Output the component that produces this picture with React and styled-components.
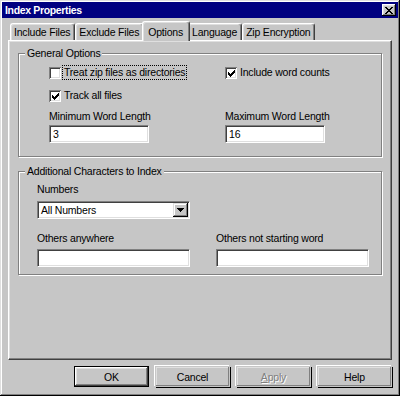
import React from 'react';
import styled, { createGlobalStyle } from 'styled-components';

const FACE = '#c6c6c6';

const GlobalStyle = createGlobalStyle`
  html, body { margin: 0; padding: 0; background: ${FACE}; }
  body { font-family: "Liberation Sans", Arial, sans-serif; }
  *, *::before, *::after { box-sizing: border-box; }
`;

const Window = styled.div`
  width: 400px;
  height: 396px;
  padding: 2px;
  display: flex;
  flex-direction: column;
  background: ${FACE};
  color: #000;
  font-size: 10.5px;
  letter-spacing: -0.2px;
  box-shadow: inset -1px -1px #000, inset 1px 1px #dfdfdf,
    inset -2px -2px #808080, inset 2px 2px #fff;
`;

const TitleBar = styled.div`
  height: 16px;
  flex: none;
  display: flex;
  align-items: center;
  justify-content: space-between;
  padding: 0 2px 0 3px;
  background: #000080;
`;

const Title = styled.div`
  color: #fff;
  font-weight: bold;
  font-size: 10.5px;
  letter-spacing: -0.35px;
  line-height: 16px;
`;

const CloseButton = styled.div`
  width: 14px;
  height: 12px;
  display: flex;
  align-items: center;
  justify-content: center;
  background: ${FACE};
  box-shadow: inset -1px -1px #000, inset 1px 1px #fff,
    inset -2px -2px #808080, inset 2px 2px #dfdfdf;
`;

const Body = styled.div`
  flex: 1;
  display: flex;
  flex-direction: column;
  padding: 3px 6px 7px 6px;
`;

const TabRow = styled.div`
  height: 19px;
  flex: none;
  display: flex;
  align-items: flex-end;
  padding-left: 2px;
`;

const Tab = styled.div`
  height: ${(p) => (p.$active ? 20 : 17)}px;
  margin: ${(p) => (p.$active ? '0 -2px -1px' : '0')};
  padding: ${(p) => (p.$active ? '0 6px 0 5px' : '0 4px 0 3px')};
  display: flex;
  align-items: center;
  white-space: nowrap;
  background: ${FACE};
  border-top: 1px solid #fff;
  border-left: 1px solid #fff;
  border-right: 1px solid #404040;
  border-radius: 3px 3px 0 0;
  box-shadow: inset -1px 0 #808080, inset 1px 1px #dfdfdf;
  position: ${(p) => (p.$active ? 'relative' : 'static')};
  z-index: ${(p) => (p.$active ? 2 : 'auto')};
`;

const Panel = styled.div`
  height: 320px;
  flex: none;
  display: flex;
  flex-direction: column;
  gap: 8px;
  padding: 6px 9px;
  border: 1px solid;
  border-color: #fff #404040 #404040 #fff;
  box-shadow: inset -1px -1px #808080, inset 1px 1px #dfdfdf;
`;

const Group = styled.fieldset`
  margin: 0;
  padding: 0;
  min-width: 0;
  border: 1px solid #808080;
  box-shadow: inset 1px 1px #fff, 1px 1px #fff;
`;

const Legend = styled.legend`
  margin-left: 6px;
  padding: 0 2px;
  line-height: 13px;
  background: ${FACE};
`;

const GroupBody = styled.div`
  display: flex;
  flex-direction: column;
  padding: ${(p) => p.$pad};
`;

const Columns = styled.div`
  display: grid;
  grid-template-columns: ${(p) => p.$cols};
  column-gap: ${(p) => p.$gap || 0}px;
  margin-top: ${(p) => p.$mt || 0}px;
`;

const Field = styled.div`
  display: flex;
  flex-direction: column;
  gap: ${(p) => p.$gap}px;
`;

const Label = styled.div`
  line-height: 13px;
  white-space: nowrap;
`;

const TextBox = styled.div`
  width: ${(p) => p.$w}px;
  height: 18px;
  display: flex;
  align-items: center;
  padding-left: 3px;
  background: #fff;
  border: 1px solid;
  border-color: #808080 #fff #fff #808080;
  box-shadow: inset 1px 1px #404040, inset -1px -1px #dfdfdf;
`;

const Select = styled(TextBox)`
  justify-content: space-between;
  padding-right: 1px;
`;

const ArrowButton = styled.div`
  width: 15px;
  height: 14px;
  display: flex;
  align-items: center;
  justify-content: center;
  background: ${FACE};
  box-shadow: inset -1px -1px #000, inset 1px 1px #dfdfdf,
    inset -2px -2px #808080, inset 2px 2px #fff;
`;

const CheckRow = styled.div`
  height: 15px;
  display: flex;
  align-items: center;
  gap: 1px;
`;

const CheckBox = styled.div`
  width: 12px;
  height: 12px;
  flex: none;
  display: flex;
  align-items: center;
  justify-content: center;
  padding: 1px 0 0 1px;
  background: #fff;
  box-shadow: inset 1px 1px #808080, inset -1px -1px #fff,
    inset 2px 2px #404040, inset -2px -2px #dfdfdf;
`;

const CheckText = styled.div`
  line-height: 13px;
  padding: 0 1px;
  white-space: nowrap;
  border: 1px dotted ${(p) => (p.$focused ? '#000' : 'transparent')};
`;

const ButtonRow = styled.div`
  display: flex;
  justify-content: flex-end;
  gap: 6px;
  margin-top: 6px;
`;

const Button = styled.div`
  width: 75px;
  height: 21px;
  display: flex;
  align-items: center;
  justify-content: center;
  background: ${FACE};
  border: 1px solid ${(p) => (p.$default ? '#000' : 'transparent')};
  box-shadow: ${(p) =>
    p.$default
      ? 'inset -1px -1px #404040, inset 1px 1px #fff, inset -2px -2px #808080, inset 2px 2px #dfdfdf'
      : '-1px -1px 0 0 #fff, 1px 1px 0 0 #000, inset -1px -1px #808080, inset 1px 1px #dfdfdf'};
  color: ${(p) => (p.$disabled ? '#808080' : '#000')};
  text-shadow: ${(p) => (p.$disabled ? '1px 1px 0 #fff' : 'none')};
`;

const Pixels = ({ rows, color = '#000' }) => {
  const rects = [];
  rows.forEach((r, y) =>
    r.split('').forEach((c, x) => {
      if (c === 'x') rects.push(<rect key={`${x}-${y}`} x={x} y={y} width="1" height="1" fill={color} />);
    })
  );
  return (
    <svg width={rows[0].length} height={rows.length} viewBox={`0 0 ${rows[0].length} ${rows.length}`} shapeRendering="crispEdges">
      {rects}
    </svg>
  );
};

const X_ICON = ['xx....xx', '.xx..xx.', '..xxxx..', '...xx...', '..xxxx..', '.xx..xx.', 'xx....xx'];
const CHECK_ICON = ['......x', '.....xx', 'x...xxx', 'xx.xxx.', 'xxxxx..', '.xxx...', '..x....'];
const ARROW_ICON = ['xxxxxxx', '.xxxxx.', '..xxx..', '...x...'];

const Check = ({ checked, focused, children }) => (
  <CheckRow>
    <CheckBox>{checked && <Pixels rows={CHECK_ICON} />}</CheckBox>
    <CheckText $focused={focused}>{children}</CheckText>
  </CheckRow>
);

const tabs = ['Include Files', 'Exclude Files', 'Options', 'Language', 'Zip Encryption'];

export default function App() {
  return (
    <>
      <GlobalStyle />
      <Window>
        <TitleBar>
          <Title>Index Properties</Title>
          <CloseButton>
            <Pixels rows={X_ICON} />
          </CloseButton>
        </TitleBar>
        <Body>
          <TabRow>
            {tabs.map((t) => (
              <Tab key={t} $active={t === 'Options'}>
                {t}
              </Tab>
            ))}
          </TabRow>
          <Panel>
            <Group>
              <Legend>General Options</Legend>
              <GroupBody $pad="5px 0 13px 30px">
                <Columns $cols="176px 1fr">
                  <Check focused>Treat zip files as directories</Check>
                  <Check checked>Include word counts</Check>
                </Columns>
                <Columns $cols="176px 1fr" $mt={8}>
                  <Check checked>Track all files</Check>
                </Columns>
                <Columns $cols="176px 1fr" $mt={7}>
                  <Field $gap={2}>
                    <Label>Minimum Word Length</Label>
                    <TextBox $w={100}>3</TextBox>
                  </Field>
                  <Field $gap={2}>
                    <Label>Maximum Word Length</Label>
                    <TextBox $w={100}>16</TextBox>
                  </Field>
                </Columns>
              </GroupBody>
            </Group>
            <Group>
              <Legend>Additional Characters to Index</Legend>
              <GroupBody $pad="5px 0 7px 18px">
                <Field $gap={5}>
                  <Label>Numbers</Label>
                  <Select $w={153}>
                    All Numbers
                    <ArrowButton>
                      <Pixels rows={ARROW_ICON} />
                    </ArrowButton>
                  </Select>
                </Field>
                <Columns $cols="153px 153px" $gap={26} $mt={13}>
                  <Field $gap={4}>
                    <Label>Others anywhere</Label>
                    <TextBox $w={153} />
                  </Field>
                  <Field $gap={4}>
                    <Label>Others not starting word</Label>
                    <TextBox $w={153} />
                  </Field>
                </Columns>
              </GroupBody>
            </Group>
          </Panel>
          <ButtonRow>
            <Button $default>OK</Button>
            <Button>Cancel</Button>
            <Button $disabled>
              <u>A</u>pply
            </Button>
            <Button>Help</Button>
          </ButtonRow>
        </Body>
      </Window>
    </>
  );
}
